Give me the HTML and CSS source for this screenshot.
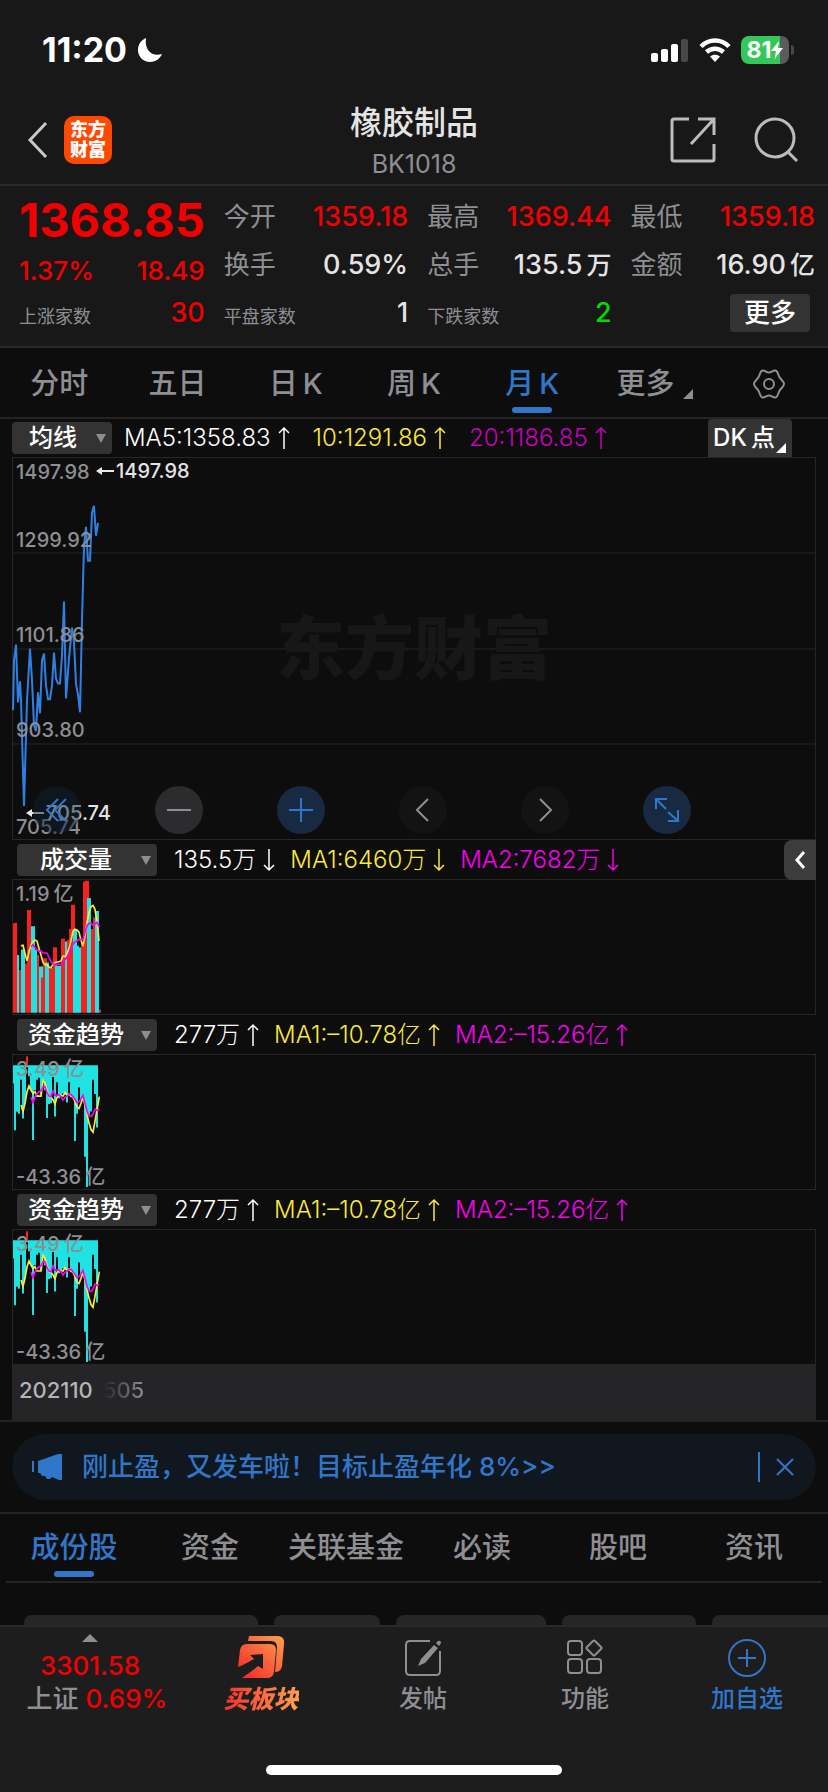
FILE: index.html
```html
<!DOCTYPE html>
<html lang="zh-CN">
<head>
    <meta charset="utf-8" />
    <meta name="viewport" content="width=device-width, initial-scale=1">
    <title>橡胶制品 BK1018</title>
    <link rel="stylesheet" href="styles.css">
</head>

<body>
<!-- 公用图形 -->
<svg class="defs" width="0" height="0" aria-hidden="true">
    <symbol id="fundChart" viewBox="36 43 270 408" preserveAspectRatio="none">
        <path stroke="#1fe3e3" stroke-width="6" d="M42 76V130M45 76V272M51 76V216M57 76V222M63 76V118M69 76V236M75 76V190M87 76V108M93 76V150M99 76V302M105 76V150M111 76V118M117 76V112M123 76V165M129 76V120M135 76V150M141 76V235M147 76V192M153 76V190M159 76V110M165 76V230M171 76V126M177 76V175M183 76V165M189 76V160M195 76V165M201 76V188M207 76V126M213 76V170M219 76V170M225 76V305M231 76V222M237 76V142M243 76V180M249 76V180M255 76V353M261 76V445M267 76V225M273 76V215M279 76V118M285 76V162M291 76V264M39 77H294"/>
        <path stroke="#fb2020" stroke-width="6" d="M81 47V76"/>
        <path class="ma yellow" d="M63 195L69 215 75 190 81 155 87 137 93 150 99 160 105 155 111 168H123L129 120 135 128 141 150 147 170 153 172 159 180 165 192 171 172 177 165 189 168 195 157 201 165 207 162 213 168 219 172 225 185 231 202 237 206 243 190 249 172 255 195 261 225 267 250 273 270 279 278 285 245 291 210 298 170"/>
        <path class="ma pink" d="M93 172L99 188 105 170 111 160 117 155 123 152 129 140H135L141 158 147 168 153 170 159 152 165 165H177L183 170 189 180 195 172 201 168 207 163H213L219 170 225 178 231 188 237 185 243 176 249 166 255 190 261 215 267 228 273 230 279 222 285 208 291 212 298 208"/>
    </symbol>
    <symbol id="up" viewBox="0 0 12 24"><path d="M6 23V2M1 7l5-5 5 5" fill="none" stroke="currentColor" stroke-width="1.500"/></symbol>
    <symbol id="down" viewBox="0 0 12 24"><path d="M6 1v21M1 17l5 5 5-5" fill="none" stroke="currentColor" stroke-width="1.500"/></symbol>
    <linearGradient id="fire" x1="0" y1="1" x2="1" y2="0">
        <stop offset="0.1" stop-color="#f5302a"/>
        <stop offset="1" stop-color="#ffa050"/>
    </linearGradient>
</svg>

<header class="top">
    <div class="status">
        <span class="time">11:20</span>
        <svg class="moon" width="26" height="26" viewBox="0 0 26 26"><path fill="#fff" d="M9 1C3.500 3.500 1 8 1 13c0 7 5.500 12 12 12 5 0 10-3 12-8-9 3-18-3-16-16z"/></svg>
        <svg width="38" height="24" viewBox="0 0 38 24">
            <rect x="0" y="15" width="7" height="9" rx="2" fill="#fff"/>
            <rect x="10" y="11" width="7" height="13" rx="2" fill="#fff"/>
            <rect x="20" y="6" width="7" height="18" rx="2" fill="#fff"/>
            <rect x="30" y="1" width="7" height="23" rx="2" fill="#48484a"/>
        </svg>
        <svg width="32" height="24" viewBox="0 0 32 24">
            <path d="M2 8.500C10 0.500 22 0.500 30 8.500M7.500 14c5-4.500 12-4.500 17 0" fill="none" stroke="#fff" stroke-width="4.500"/>
            <path d="M16 24l-5-5.500c3-2.500 7-2.500 10 0z" fill="#fff"/>
        </svg>
        <div class="battery"><span>81</span><svg width="12" height="18" viewBox="0 0 12 18"><path fill="#fff" d="M8 0L0 10h5L3.500 18 12 7H7z"/></svg></div>
    </div>
    <div class="nav">
        <button class="icon" aria-label="返回"><svg width="24" height="40" viewBox="0 0 24 40"><path d="M20 3L4 20l16 17" fill="none" stroke="#c8c8c8" stroke-width="3"/></svg></button>
        <a class="logo" href="#">东方<br>财富</a>
        <div class="title">
            <h1>橡胶制品</h1>
            <p>BK1018</p>
        </div>
        <button class="icon" aria-label="分享"><svg width="46" height="46" viewBox="0 0 46 46"><path d="M19 2H4Q2 2 2 4v38q0 2 2 2h38q2 0 2-2V27M28 2h16v16M44 2L21 27" fill="none" stroke="#bcbcbc" stroke-width="3"/></svg></button>
        <button class="icon" aria-label="搜索"><svg width="46" height="46" viewBox="0 0 46 46"><circle cx="21" cy="21" r="19" fill="none" stroke="#bcbcbc" stroke-width="3"/><path d="M34 35l9 9" stroke="#bcbcbc" stroke-width="3"/></svg></button>
    </div>
</header>

<section class="quote">
    <div class="col first">
        <div class="price up">1368.85</div>
        <div class="row up"><span>1.37%</span><span>18.49</span></div>
        <div class="row"><small>上涨家数</small><b class="up">30</b></div>
    </div>
    <div class="col">
        <div class="row"><span>今开</span><b class="up">1359.18</b></div>
        <div class="row"><span>换手</span><b>0.59%</b></div>
        <div class="row"><small>平盘家数</small><b>1</b></div>
    </div>
    <div class="col">
        <div class="row"><span>最高</span><b class="up">1369.44</b></div>
        <div class="row"><span>总手</span><b>135.5<u>万</u></b></div>
        <div class="row"><small>下跌家数</small><b class="down">2</b></div>
    </div>
    <div class="col">
        <div class="row"><span>最低</span><b class="up">1359.18</b></div>
        <div class="row"><span>金额</span><b>16.90<u>亿</u></b></div>
        <div class="row end"><button class="more">更多</button></div>
    </div>
</section>

<nav class="tabs period">
    <a href="#">分时</a>
    <a href="#">五日</a>
    <a href="#">日<u>K</u></a>
    <a href="#">周<u>K</u></a>
    <a href="#" class="on">月<u>K</u></a>
    <a href="#">更多<i class="corner"></i></a>
    <a href="#" aria-label="设置"><svg width="32" height="32" viewBox="0 0 32 32" fill="none" stroke="#8e8e93" stroke-width="2"><path d="M16 4.500c3 0 4-2.500 6.500-2 2.500.6 2.400 4 3.900 6.600 1.500 2.600 4.600 4 4.600 6.900s-3.100 4.300-4.600 6.900c-1.500 2.600-1.400 6-3.900 6.600-2.500.5-3.500-2-6.500-2s-4 2.500-6.500 2c-2.500-.6-2.400-4-3.900-6.600C4.100 20.300 1 18.900 1 16s3.100-4.300 4.600-6.900c1.500-2.600 1.400-6 3.900-6.600 2.500-.5 3.500 2 6.500 2z"/><circle cx="16" cy="16" r="5"/></svg></a>
</nav>

<main class="charts">
    <div class="bar main">
        <button class="pick short">均线<i></i></button>
        <span>MA5:1358.83<svg><use href="#up"/></svg></span>
        <span class="c-yellow">10:1291.86<svg><use href="#up"/></svg></span>
        <span class="c-purple">20:1186.85<svg><use href="#up"/></svg></span>
        <button class="dk">DK<u>点</u><i class="corner"></i></button>
    </div>
    <div class="box kline">
        <div class="cell"></div><div class="cell"></div><div class="cell"></div><div class="cell"></div>
        <div class="watermark">东方财富</div>
        <svg class="plot" viewBox="12 457 90 382" preserveAspectRatio="none"><path fill="none" stroke="#2f80e4" stroke-width="2" d="M13 710L14 660 16 644 18 702 20 681 21 700 24 806 27 700 30 648 32 680 34 725 36 731 38 692 40 713 42 660 44 653 46 685 48 699H50L52 685 54 652 56 678 58 683H60L62 655 64 601 66 698 69 658 72 627 74 642 76 684 78 694 80 712 82 620 84 545 86 526 88 560H90L92 512 94 505 96 535 98 522"/></svg>
        <span class="y y1">1497.98</span>
        <span class="y y2">1299.92</span>
        <span class="y y3">1101.86</span>
        <span class="y y4">903.80</span>
        <span class="y y5">705.74</span>
        <span class="mark high"><svg width="18" height="10" viewBox="0 0 18 10"><path fill="#e8e8e8" d="M0 5l6-4v3h12v2H6v3z"/></svg>1497.98</span>
        <span class="mark low"><svg width="18" height="10" viewBox="0 0 18 10"><path fill="#e8e8e8" d="M0 5l6-4v3h12v2H6v3z"/></svg>705.74</span>
        <div class="tools">
            <button class="faint blue" aria-label="快退"><svg width="24" height="24" viewBox="0 0 24 24"><path d="M13 1L2 12l11 11M21 1L10 12l11 11"/></svg></button>
            <button class="gray" aria-label="缩小"><svg width="24" height="24" viewBox="0 0 24 24"><path d="M0 12h24"/></svg></button>
            <button class="blue" aria-label="放大"><svg width="24" height="24" viewBox="0 0 24 24"><path d="M0 12h24M12 0v24"/></svg></button>
            <button class="dim" aria-label="左移"><svg width="24" height="24" viewBox="0 0 24 24"><path d="M17 1L6 12l11 11"/></svg></button>
            <button class="dim" aria-label="右移"><svg width="24" height="24" viewBox="0 0 24 24"><path d="M7 1l11 11L7 23"/></svg></button>
            <button class="blue" aria-label="全屏"><svg width="24" height="24" viewBox="0 0 24 24"><path d="M1 11V1h11M1 1l10 10M13 23h10V12M23 23L13 14"/></svg></button>
        </div>
    </div>

    <div class="bar">
        <button class="pick">成交量<i></i></button>
        <span>135.5万<svg><use href="#down"/></svg></span>
        <span class="c-yellow">MA1:6460万<svg><use href="#down"/></svg></span>
        <span class="c-pink">MA2:7682万<svg><use href="#down"/></svg></span>
        <button class="fold" aria-label="展开"><svg width="12" height="18" viewBox="0 0 12 18"><path d="M10 1L3 9l7 8" fill="none" stroke="#fff" stroke-width="3"/></svg></button>
    </div>
    <div class="box sub">
        <svg class="plot" viewBox="36 55 270 411" preserveAspectRatio="none" fill="none">
            <path stroke="#fb2020" stroke-width="6" d="M42 462V188M48 462V186M60 462V331M78 462V312M84 462V147M90 462V147M114 462V285M126 462V355M132 462V295M138 462V295M150 462V325M156 462V325M162 462V261M168 462V261M186 462V235M192 462V235M204 462V238M210 462V205M216 462V131M222 462V131M246 462V245M252 462V60M258 462V57M264 462V57M276 462V205M282 462V170M300 462V452"/>
            <path stroke="#1fe3e3" stroke-width="6" d="M54 462V285M66 462V268M72 462V268M96 462V197M102 462V197M108 462V270M120 462V320M126 355V320M138 462V308M144 462V308M168 462V318M174 462V318M180 462V318M198 462V244M222 462V207M228 462V207M234 462V257M240 462V262M264 462V110M270 462V110M288 462V150M294 462V150"/>
            <path class="ma yellow" d="M63 257L69 255 75 280 81 303 87 275 93 255 99 244 105 239 111 242 117 265 123 285 129 308 135 315 141 314 147 322 153 324 159 314 165 308 177 306 183 303 189 288 195 290 201 280 207 265 213 240 219 212 225 206 231 208 237 215 243 240 249 258 255 225 261 185 267 155 273 137 279 133 285 145 291 180 297 242"/>
            <path class="ma pink" d="M93 260L99 253 105 262 111 270 117 273 123 273 129 279 141 279 147 292 153 305 159 312 165 314 183 313 189 304 195 300 201 292 207 280 213 262 219 252 225 245 231 242 237 237 243 238 249 238 255 215 261 195 267 188 273 188 279 194 285 190 291 185 298 200"/>
        </svg>
        <span class="y y1">1.19<u>亿</u></span>
    </div>

    <div class="bar">
        <button class="pick">资金趋势<i></i></button>
        <span>277万<svg><use href="#up"/></svg></span>
        <span class="c-yellow">MA1:–10.78亿<svg><use href="#up"/></svg></span>
        <span class="c-pink">MA2:–15.26亿<svg><use href="#up"/></svg></span>
    </div>
    <div class="box sub">
        <svg class="plot"><use href="#fundChart"/></svg>
        <span class="y y1">3.49<u>亿</u></span>
        <span class="y y5">-43.36<u>亿</u></span>
    </div>

    <div class="bar">
        <button class="pick">资金趋势<i></i></button>
        <span>277万<svg><use href="#up"/></svg></span>
        <span class="c-yellow">MA1:–10.78亿<svg><use href="#up"/></svg></span>
        <span class="c-pink">MA2:–15.26亿<svg><use href="#up"/></svg></span>
    </div>
    <div class="box sub">
        <svg class="plot"><use href="#fundChart"/></svg>
        <span class="y y1">3.49<u>亿</u></span>
        <span class="y y5">-43.36<u>亿</u></span>
    </div>
    <div class="dates"><span>202110</span><span class="fade">505</span></div>
</main>

<aside class="notice">
    <svg width="30" height="28" viewBox="0 0 30 28" fill="#3076c9"><path d="M0 8h2v11H0zM6 8L26 1h4v26h-3l-7-3-2 2-3 0-2-3-3 0-2-3H6z"/></svg>
    <a href="#">刚止盈，又发车啦！目标止盈年化 8%&gt;&gt;</a>
    <button class="close" aria-label="关闭"><svg width="18" height="18" viewBox="0 0 18 18"><path d="M1 1l16 16M17 1L1 17" stroke="#3076c9" stroke-width="2"/></svg></button>
</aside>

<nav class="tabs info">
    <a href="#" class="on">成份股</a>
    <a href="#">资金</a>
    <a href="#">关联基金</a>
    <a href="#">必读</a>
    <a href="#">股吧</a>
    <a href="#">资讯</a>
</nav>
<div class="chips"><i></i><i></i><i></i><i></i><i></i></div>

<footer class="dock">
    <div class="items">
        <a href="#" class="index">
            <i></i>
            <b class="up">3301.58</b>
            <span>上证 <b class="up">0.69%</b></span>
        </a>
        <a href="#" class="buy">
            <svg width="46" height="42" viewBox="0 0 46 42"><path fill="url(#fire)" d="M11 0h28q8 0 7 8l-2 22q-1 6-7 6l2-25q0-6-6-6H10zM9 8h23q6 0 6 6l-2 22q-1 6-7 6H4c5-4 12-8 16-12l5 3 0-15-13 1 4 4C12 25 6 29 0 31L2 14q1-6 7-6z"/></svg>
            <span>买板块</span>
        </a>
        <a href="#">
            <svg width="38" height="38" viewBox="0 0 38 38" fill="none" stroke="#8e8e93" stroke-width="2"><path d="M26 2H6Q2 2 2 6v26q0 4 4 4h26q4 0 4-4V12"/><path fill="#8e8e93" stroke="none" d="M30 6l4 3-13 15-7 3 3-7zM32 4l2-2q3-1 3 2l-2 3z"/></svg>
            <span>发帖</span>
        </a>
        <a href="#">
            <svg width="36" height="36" viewBox="0 0 36 36" fill="none" stroke="#8e8e93" stroke-width="2"><rect x="1" y="2" width="14" height="14" rx="3"/><rect x="1" y="20" width="14" height="14" rx="3"/><rect x="20" y="20" width="14" height="14" rx="3"/><path d="M26 2q1-1 2 0l6 6q1 1 0 2l-6 6q-1 1-2 0l-6-6q-1-1 0-2z"/></svg>
            <span>功能</span>
        </a>
        <a href="#" class="add">
            <svg width="38" height="38" viewBox="0 0 38 38" fill="none" stroke="#3076c9" stroke-width="2"><circle cx="19" cy="19" r="18"/><path d="M10 19h18M19 10v18"/></svg>
            <span>加自选</span>
        </a>
    </div>
    <div class="home"></div>
</footer>
</body>
</html>
```
FILE: styles.css
```css
*{ margin:0; padding:0; box-sizing:border-box}
body{
    background:#0d0d0d; color:#e4e4e4;
    font-family:Inter, "Noto Sans CJK SC", sans-serif;
    font-size:26px; line-height:32px;
}
a{ color:inherit; text-decoration:none}
i{ font-style:normal}
u{ text-decoration:none; margin-left:4px}
button{ font:inherit; color:inherit; background:none; border:0; cursor:pointer}
svg{ display:block; flex:none}
.defs{ position:absolute}
.up{ color:#f00000}
.down{ color:#00dc00}
.c-yellow{ color:#fbe93c}
.c-purple{ color:#c800c0}
.c-pink{ color:#f800f0}

/* 状态栏、标题 */
.top{ background:#181818; border-bottom:2px solid #2a2a2a}
.status{
    display:flex; align-items:center; gap:10px;
    height:96px; padding:32px 39px 28px 42px;
}
.time{ font-size:34px; font-weight:700; color:#fff}
.moon{ margin-right:auto}
.battery{
    display:flex; align-items:center; justify-content:center;
    position:relative;
    width:48px; height:28px; border-radius:8px;
    background:linear-gradient(90deg, #34c759 82%, #5c5c60 82%);
    color:#fff; font-size:23px; font-weight:700;
}
.battery:after{
    content:""; position:absolute; right:-5px; top:9px;
    width:3px; height:10px; border-radius:0 3px 3px 0; background:#48484a
}
.nav{
    display:flex; align-items:center; gap:14px;
    position:relative;
    height:88px; padding:0 28px 0 26px;
}
.logo{
    width:48px; height:48px; border-radius:10px;
    margin-right:auto; padding-top:4px;
    background:#ff4800; color:#fff;
    font-size:18px; font-weight:900; line-height:20px; text-align:center;
}
.title{ position:absolute; left:50%; top:7px; transform:translateX(-50%); text-align:center}
.title h1{ font-size:32px; font-weight:500; line-height:40px}
.title p{ font-size:25px; line-height:42px; color:#8e8e93}
.nav .icon + .icon{ margin-left:24px}

/* 行情 */
.quote{
    display:grid; grid-template-columns:repeat(4, 1fr); gap:19px;
    padding:7px 13px 0 19px; height:162px;
    background:#181818; border-bottom:2px solid #2a2a2a;
}
.row{ display:flex; align-items:center; justify-content:space-between; height:48px}
.row span{ color:#8e8e93; white-space:nowrap}
.row b{ font-weight:500; font-size:27px; white-space:nowrap}
.row u{ font-size:25px}
.row small{ font-size:18px; color:#8e8e93; padding-top:8px}
.row.up span{ color:inherit; font-size:26px; font-weight:500}
.price{ font-size:47px; font-weight:700; height:54px; line-height:54px}
.first .row{ height:44px}
.first .row.up{ padding-top:4px}
.row.end{ justify-content:flex-end; padding-right:5px}
.more{ width:80px; height:38px; border-radius:4px; background:#333; color:#fff; font-weight:500}

/* 切换栏 */
.tabs{ display:flex; color:#8e8e93; font-size:29px; font-weight:500; border-bottom:2px solid #242424}
.tabs a{
    flex:1; position:relative;
    display:flex; align-items:center; justify-content:center;
    height:69px; padding-top:3px; white-space:nowrap;
}
.tabs .on{ color:#3076c9}
.tabs .on:after{
    content:""; position:absolute; bottom:4px; left:50%; margin-left:-20px;
    width:40px; height:6px; border-radius:3px; background:#3076c9
}
.corner{ border:solid transparent; border-width:10px 0 0 10px; border-bottom:10px solid; border-top:0}
.period .corner{ margin:20px -8px 0 8px}
.tabs u{ margin-left:5px}

/* 图表 */
.charts{ margin:0 12px}
.bar{
    display:flex; align-items:center; gap:17px;
    position:relative;
    height:39px; padding-left:5px;
    color:#fff; font-size:24px; font-weight:300; white-space:nowrap;
}
.bar.main{ height:38px; padding-left:0; gap:12px}
.bar span{ display:flex; align-items:center}
.bar span svg{ width:12px; height:24px; margin-left:7px}
.bar .c-yellow,.bar .c-pink{ margin-left:-2px}
.main .c-yellow,.main .c-purple{ margin-left:11px}
.pick{
    display:flex; align-items:center; justify-content:center;
    position:relative;
    width:140px; height:32px; padding-right:22px; border-radius:4px;
    background:#333; font-size:24px; font-weight:500;
}
.pick.short{ width:100px; padding-right:18px}
.pick i{
    position:absolute; right:6px; top:12px;
    border:solid transparent; border-width:9px 5px 0; border-top-color:#8e8e93
}
.dk{
    position:absolute; right:24px; top:0;
    width:84px; height:38px; border-radius:4px 4px 0 0;
    padding-right:12px;
    background:#333; font-size:24px; font-weight:500;
}
.dk .corner{ position:absolute; right:6px; bottom:4px}
.fold{
    position:absolute; right:0; top:0;
    display:flex; align-items:center; justify-content:center;
    width:32px; height:40px; border-radius:8px 0 0 8px; background:#3c3c3c;
    z-index:1
}
.box{ position:relative; border:1px solid #262626}
.kline{ height:383px; display:flex; flex-direction:column}
.cell{ flex:1; border-bottom:2px solid #191919}
.cell:nth-child(4){ border:0}
.sub{ height:136px}
.plot{ position:absolute; left:-1px; top:0; width:90px; height:100%}
.ma{ fill:none; stroke-width:5}
.yellow{ stroke:#fbe93c}
.pink{ stroke:#f800f0}
.watermark{
    position:absolute; left:0; right:0; top:50%; margin-top:-50px;
    color:#171717; font-size:69px; font-weight:900; line-height:100px; text-align:center;
}
.y{ position:absolute; left:3px; font-size:20px; line-height:24px; font-weight:500; color:#8e8e93; white-space:nowrap}
.y1{ top:2px}
.y2{ bottom:287px}
.y3{ bottom:192px}
.y4{ bottom:97px}
.y5{ bottom:0}
.mark{ position:absolute; display:flex; align-items:center; gap:2px; font-size:20px; line-height:24px; font-weight:500}
.high{ left:83px; top:1px}
.low{ left:13px; bottom:14px}
.tools{
    position:absolute; left:20px; bottom:5px;
    display:flex; gap:74px
}
.tools button{
    display:flex; align-items:center; justify-content:center;
    width:48px; height:48px; border-radius:50%;
}
.tools path{ fill:none; stroke:currentColor; stroke-width:2}
.tools .gray{ background:#2c2c2e; color:#8e8e93}
.tools .dim{ background:#131313; color:#8e8e93}
.tools .blue{ background:#172a42; color:#3076c9}
.tools .faint{ background:rgba(16,32,52,.5)}
.dates{
    display:flex; gap:10px;
    height:56px; padding:10px 7px; background:#252527;
    font-size:22px; font-weight:500; line-height:30px; color:#b4b4b4;
}
.fade{
    background:linear-gradient(90deg, #252527, #8e8e93); color:transparent;
    -webkit-background-clip:text; background-clip:text
}

/* 公告 */
.notice{
    display:flex; align-items:center; gap:20px;
    position:relative;
    margin:13px 12px 11px; padding:0 22px 0 20px;
    height:66px; border-radius:33px;
    background:#10171f; color:#3076c9; font-size:26px; font-weight:500;
}
.notice:before{ content:""; position:absolute; left:-12px; right:-12px; top:-14px; height:90px; border:solid #242424; border-width:2px 0}
.notice a{ flex:1; position:relative; white-space:nowrap}
.close{ position:relative; height:30px; padding-left:16px; border-left:2px solid #3076c9}
.info{ margin:0 6px}
.info a{ height:70px; padding-top:4px}
.chips{ display:flex; gap:16px; padding:32px 0 0 24px; overflow:hidden}
.chips i{ flex:none; width:234px; height:60px; border-radius:8px; background:#262626}
.chips i:nth-child(2){ width:106px}
.chips i:nth-child(3){ width:150px}
.chips i:nth-child(4){ width:134px}

/* 底部 */
.dock{
    position:fixed; left:0; right:0; bottom:0;
    height:167px; background:#1d1d1d; border-top:2px solid #2a2a2a;
}
.items{ display:grid; grid-template-columns:180px repeat(4, 1fr)}
.items a{
    display:flex; flex-direction:column; align-items:center; justify-content:space-between;
    height:88px; padding-top:12px; color:#8e8e93; font-size:24px; font-weight:500;
}
.items .add{ color:#3076c9}
.items .buy{ padding-top:9px}
.items .buy span{
    font-size:25px; font-weight:900; font-style:italic;
    background:linear-gradient(90deg, #f5302a, #ffa050); color:transparent;
    -webkit-background-clip:text; background-clip:text
}
.items .index{ padding-top:7px; font-size:26px}
.index b{ font-weight:500}
.index > b{ margin-top:6px; line-height:30px}
.index span{ padding-left:14px}
.index i{ border:solid transparent; border-width:0 8px 8px; border-bottom-color:#8e8e93}
.home{ width:296px; height:10px; margin:50px auto 0; border-radius:5px; background:#fff}
```
